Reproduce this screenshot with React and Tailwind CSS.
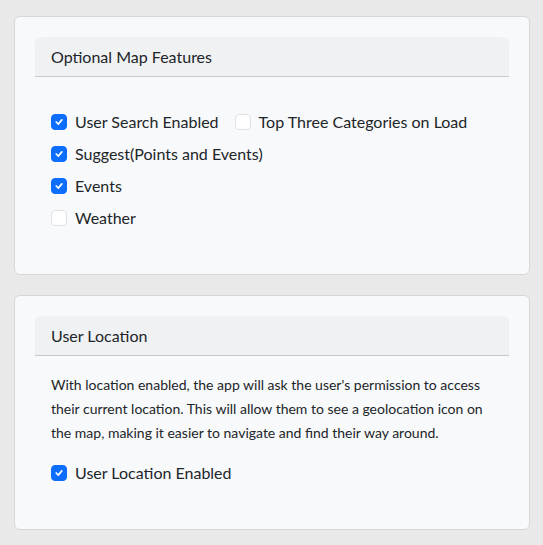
import { useState } from "react";

function Check({ checked, onChange, label }) {
  return (
    <label className="flex h-6 cursor-pointer items-center gap-2 text-base text-[#212529]">
      <span
        onClick={onChange}
        className={
          checked
            ? "flex h-4 w-4 items-center justify-center rounded-[4px] border border-[#0d6efd] bg-[#0d6efd]"
            : "flex h-4 w-4 items-center justify-center rounded-[4px] border border-[#dee2e6] bg-white"
        }
      >
        {checked && (
          <svg viewBox="0 0 20 20" className="h-4 w-4" fill="none">
            <path d="M6 10l3 3 5-6" stroke="#fff" strokeWidth="2.4" strokeLinecap="round" strokeLinejoin="round" />
          </svg>
        )}
      </span>
      <span onClick={onChange}>{label}</span>
    </label>
  );
}

function Card({ title, children, className }) {
  return (
    <div className="rounded-md border border-[#d6d7d8] bg-[#f8f9fa] p-5">
      <div className="flex h-10 items-center rounded-t-md border-b border-[#c8c9ca] bg-[#f0f1f2] px-4 text-base text-[#212529]">
        {title}
      </div>
      <div className={className}>{children}</div>
    </div>
  );
}

export default function App() {
  const [opts, setOpts] = useState({
    search: true,
    topThree: false,
    suggest: true,
    events: true,
    weather: false,
    location: true,
  });
  const toggle = (k) => () => setOpts((o) => ({ ...o, [k]: !o[k] }));

  return (
    <div className="min-h-screen bg-[#e9e9e9] pt-4 pb-4" style={{ fontFamily: '"Segoe UI", "Lato", "Noto Sans", sans-serif' }}>
      <div className="ml-[14px] flex w-[516px] flex-col gap-5">
        <Card title="Optional Map Features" className="flex flex-col gap-2 px-4 pt-[33px] pb-[24px]">
          <div className="flex items-center gap-4">
            <Check checked={opts.search} onChange={toggle("search")} label="User Search Enabled" />
            <Check checked={opts.topThree} onChange={toggle("topThree")} label="Top Three Categories on Load" />
          </div>
          <Check checked={opts.suggest} onChange={toggle("suggest")} label="Suggest(Points and Events)" />
          <Check checked={opts.events} onChange={toggle("events")} label="Events" />
          <Check checked={opts.weather} onChange={toggle("weather")} label="Weather" />
        </Card>

        <Card title="User Location" className="flex flex-col gap-4 px-4 pt-[17px] pb-[24px]">
          <p className="text-sm leading-6 text-[#212529]">
            With location enabled, the app will ask the user's permission to access their current location. This will
            allow them to see a geolocation icon on the map, making it easier to navigate and find their way around.
          </p>
          <Check checked={opts.location} onChange={toggle("location")} label="User Location Enabled" />
        </Card>
      </div>
    </div>
  );
}
